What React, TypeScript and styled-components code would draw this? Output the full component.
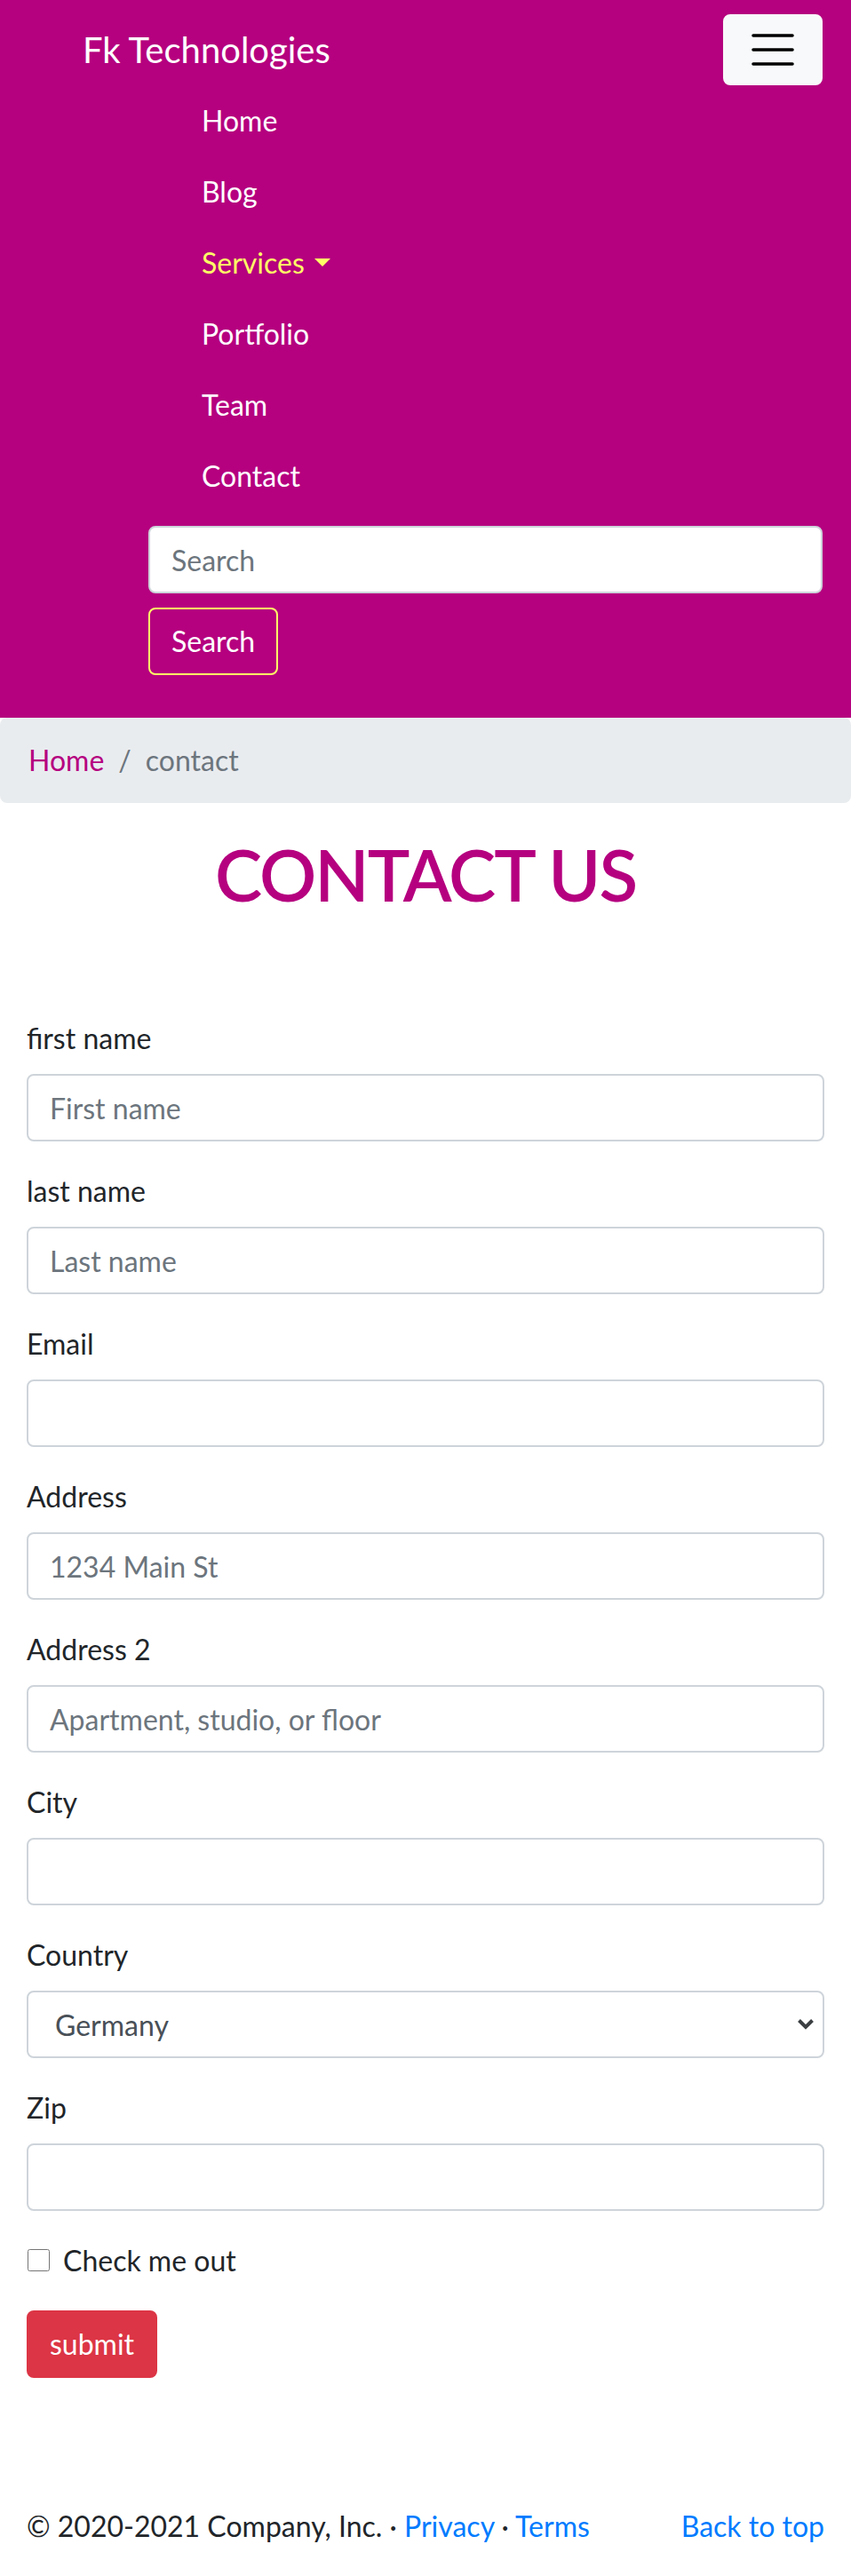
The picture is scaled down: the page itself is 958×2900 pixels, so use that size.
import React from "react";
import styled, { createGlobalStyle } from "styled-components";

const purple = "#b5007f";
const yellow = "#ffff66";

const GlobalStyle = createGlobalStyle`
  *, *::before, *::after {
    box-sizing: border-box;
  }

  body {
    margin: 0;
    background: #fff;
    color: #212529;
    font-family: Lato, "Open Sans", sans-serif;
    font-size: 32px;
    line-height: 1.5;
  }
`;

const Navbar = styled.nav`
  background: ${purple};
  padding: 16px 32px;
`;

const NavHeader = styled.div`
  display: flex;
  align-items: center;
  justify-content: space-between;
`;

const Brand = styled.a`
  margin-left: 61px;
  padding: 10px 0;
  font-size: 40px;
  line-height: 60px;
  color: #fff;
  text-decoration: none;
`;

const Toggler = styled.button`
  display: flex;
  align-items: center;
  justify-content: center;
  width: 112px;
  height: 80px;
  padding: 0;
  background: #f8f9fa;
  border: 2px solid #f8f9fa;
  border-radius: 8px;
`;

const NavList = styled.ul`
  list-style: none;
  margin: 0;
  padding: 0 0 0 195px;
`;

const NavLink = styled.a<{ $active?: boolean }>`
  display: block;
  padding: 16px 0;
  line-height: 48px;
  color: ${(p) => (p.$active ? yellow : "#fff")};
  text-decoration: none;
`;

const Caret = styled.span`
  display: inline-block;
  margin-left: 0.35em;
  vertical-align: 0.255em;
  border-top: 0.3em solid ${yellow};
  border-left: 0.3em solid transparent;
  border-right: 0.3em solid transparent;
`;

const SearchForm = styled.form`
  display: flex;
  flex-direction: column;
  align-items: flex-start;
  margin: 16px 0 16px 135px;
`;

const TextInput = styled.input`
  display: block;
  width: 100%;
  height: 76px;
  padding: 12px 24px;
  font-family: inherit;
  font-size: 32px;
  line-height: 48px;
  color: #495057;
  background: #fff;
  border: 2px solid #ced4da;
  border-radius: 8px;

  &::placeholder {
    color: #6c757d;
  }
`;

const SearchButton = styled.button`
  margin: 16px 0;
  padding: 12px 24px;
  font-family: inherit;
  font-size: 32px;
  line-height: 48px;
  color: #fff;
  background: transparent;
  border: 2px solid ${yellow};
  border-radius: 8px;
`;

const Breadcrumb = styled.ol`
  display: flex;
  list-style: none;
  margin: 0 0 32px;
  padding: 24px 32px;
  background: #e9ecef;
  border-radius: 8px;
`;

const Crumb = styled.li`
  color: #6c757d;

  & + & {
    padding-left: 16px;
  }

  & + &::before {
    content: "/";
    padding-right: 16px;
    color: #6c757d;
  }
`;

const CrumbLink = styled.a`
  color: ${purple};
  text-decoration: none;
`;

const Title = styled.h1`
  margin: 0 0 16px;
  font-size: 80px;
  line-height: 96px;
  font-weight: 600;
  letter-spacing: -2px;
  text-align: center;
  color: ${purple};
`;

const Container = styled.div`
  padding: 0 30px;
`;

const ContactForm = styled.form`
  margin-top: 113px;
`;

const FormGroup = styled.div`
  margin-bottom: 32px;
`;

const Label = styled.label`
  display: inline-block;
  margin-bottom: 16px;
`;

const SelectWrap = styled.div`
  position: relative;
`;

const Select = styled.select`
  display: block;
  width: 100%;
  height: 76px;
  padding: 12px 24px 12px 30px;
  font-family: inherit;
  font-size: 32px;
  color: #495057;
  background: #fff;
  border: 2px solid #ced4da;
  border-radius: 8px;
  appearance: none;
`;

const Chevron = styled.svg`
  position: absolute;
  top: 31px;
  right: 11px;
  pointer-events: none;
`;

const CheckRow = styled.div`
  display: flex;
  align-items: flex-start;
  margin-bottom: 32px;
`;

const Checkbox = styled.input`
  width: 25px;
  height: 25px;
  margin: 11px 15px 0 1px;
`;

const SubmitButton = styled.button`
  padding: 12px 24px;
  font-family: inherit;
  font-size: 32px;
  line-height: 48px;
  color: #fff;
  background: #dc3545;
  border: 2px solid #dc3545;
  border-radius: 8px;
`;

const Footer = styled.footer`
  display: flex;
  justify-content: space-between;
  padding: 143px 30px 0;
`;

const FooterText = styled.p`
  margin: 0 0 32px;
`;

const FooterLink = styled.a`
  color: #007bff;
  text-decoration: none;
`;

const navItems = ["Home", "Blog", "Services", "Portfolio", "Team", "Contact"];

const fields = [
  { label: "first name", placeholder: "First name" },
  { label: "last name", placeholder: "Last name" },
  { label: "Email", placeholder: "" },
  { label: "Address", placeholder: "1234 Main St" },
  { label: "Address 2", placeholder: "Apartment, studio, or floor" },
  { label: "City", placeholder: "" },
];

const App = () => {
  return (
    <>
      <GlobalStyle />
      <Navbar>
        <NavHeader>
          <Brand href="#">Fk Technologies</Brand>
          <Toggler type="button" aria-label="Toggle navigation">
            <svg width="60" height="60" viewBox="0 0 30 30">
              <path
                d="M4 7h22M4 15h22M4 23h22"
                stroke="#000"
                strokeWidth="1.8"
                strokeLinecap="round"
              />
            </svg>
          </Toggler>
        </NavHeader>
        <NavList>
          {navItems.map((item) => (
            <li key={item}>
              <NavLink href="#" $active={item === "Services"}>
                {item}
                {item === "Services" && <Caret />}
              </NavLink>
            </li>
          ))}
        </NavList>
        <SearchForm onSubmit={(e) => e.preventDefault()}>
          <TextInput type="search" placeholder="Search" />
          <SearchButton type="submit">Search</SearchButton>
        </SearchForm>
      </Navbar>

      <Breadcrumb>
        <Crumb>
          <CrumbLink href="#">Home</CrumbLink>
        </Crumb>
        <Crumb>contact</Crumb>
      </Breadcrumb>

      <Title>CONTACT US</Title>

      <Container>
        <ContactForm onSubmit={(e) => e.preventDefault()}>
          {fields.map((f) => (
            <FormGroup key={f.label}>
              <Label>{f.label}</Label>
              <TextInput type="text" placeholder={f.placeholder} />
            </FormGroup>
          ))}
          <FormGroup>
            <Label>Country</Label>
            <SelectWrap>
              <Select defaultValue="Germany">
                <option>Germany</option>
                <option>France</option>
                <option>Italy</option>
              </Select>
              <Chevron width="20" height="14" viewBox="0 0 20 14">
                <polyline
                  points="2.5,2.5 10,10 17.5,2.5"
                  fill="none"
                  stroke="#3c4043"
                  strokeWidth="4"
                />
              </Chevron>
            </SelectWrap>
          </FormGroup>
          <FormGroup>
            <Label>Zip</Label>
            <TextInput type="text" />
          </FormGroup>
          <CheckRow>
            <Checkbox type="checkbox" id="check" />
            <label htmlFor="check">Check me out</label>
          </CheckRow>
          <SubmitButton type="submit">submit</SubmitButton>
        </ContactForm>
      </Container>

      <Footer>
        <FooterText>
          © 2020-2021 Company, Inc. · <FooterLink href="#">Privacy</FooterLink> ·{" "}
          <FooterLink href="#">Terms</FooterLink>
        </FooterText>
        <FooterText>
          <FooterLink href="#">Back to top</FooterLink>
        </FooterText>
      </Footer>
    </>
  );
};

export default App;
